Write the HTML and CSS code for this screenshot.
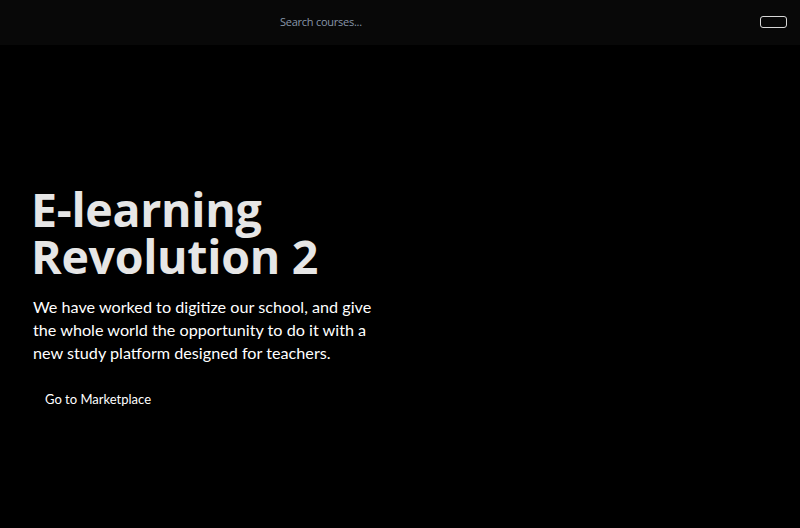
FILE: index.html
```html
<!DOCTYPE html>
<html lang="en">
<head>
<meta charset="utf-8">
<title>E-learning Revolution 2</title>
<link rel="stylesheet" href="styles.css">
</head>
<body>
<header class="topbar">
  <div class="search">Search courses...</div>
  <button class="menu-btn" aria-label="Menu"></button>
</header>
<main class="hero">
  <h1 class="hero-title"><span class="line">E-learning</span><span class="line">Revolution 2</span></h1>
  <p class="hero-text">We have worked to digitize our school, and give the whole world the opportunity to do it with a new study platform designed for teachers.</p>
  <a class="hero-link" href="#">Go to Marketplace</a>
</main>
</body>
</html>
```
FILE: styles.css
```css
* { box-sizing: border-box; }
html, body { margin: 0; height: 100%; }
body {
  background: #000;
  color: #fff;
  font-family: "Open Sans", "Noto Sans", sans-serif;
}
.topbar {
  height: 45px;
  background: #080808;
  display: flex;
  align-items: center;
  padding: 0 13px 0 280px;
}
.search {
  flex: 1;
  font-size: 11px;
  color: #8796a8;
  letter-spacing: -0.25px;
  margin-top: -3px;
}
.menu-btn {
  width: 27px;
  height: 12px;
  border: 1px solid #d8d8d8;
  border-radius: 3px;
  background: transparent;
  padding: 0;
  margin-top: -2px;
}
.hero {
  padding: 141px 0 0 33px;
}
.hero-title {
  margin: 0 0 0 -2px;
  font-size: 46.5px;
  font-weight: 700;
  color: #e6e6e6;
  letter-spacing: -0.3px;
}
.hero-title .line {
  display: block;
  height: 47px;
  line-height: 47px;
}
.hero-text {
  margin: 15px 0 0;
  width: 350px;
  font-family: "Lato", sans-serif;
  font-size: 16.2px;
  line-height: 23px;
}
.hero-link {
  display: inline-block;
  margin: 27px 0 0 12px;
  font-family: "Lato", sans-serif;
  font-size: 13px;
  color: #fff;
  text-decoration: none;
}
```
